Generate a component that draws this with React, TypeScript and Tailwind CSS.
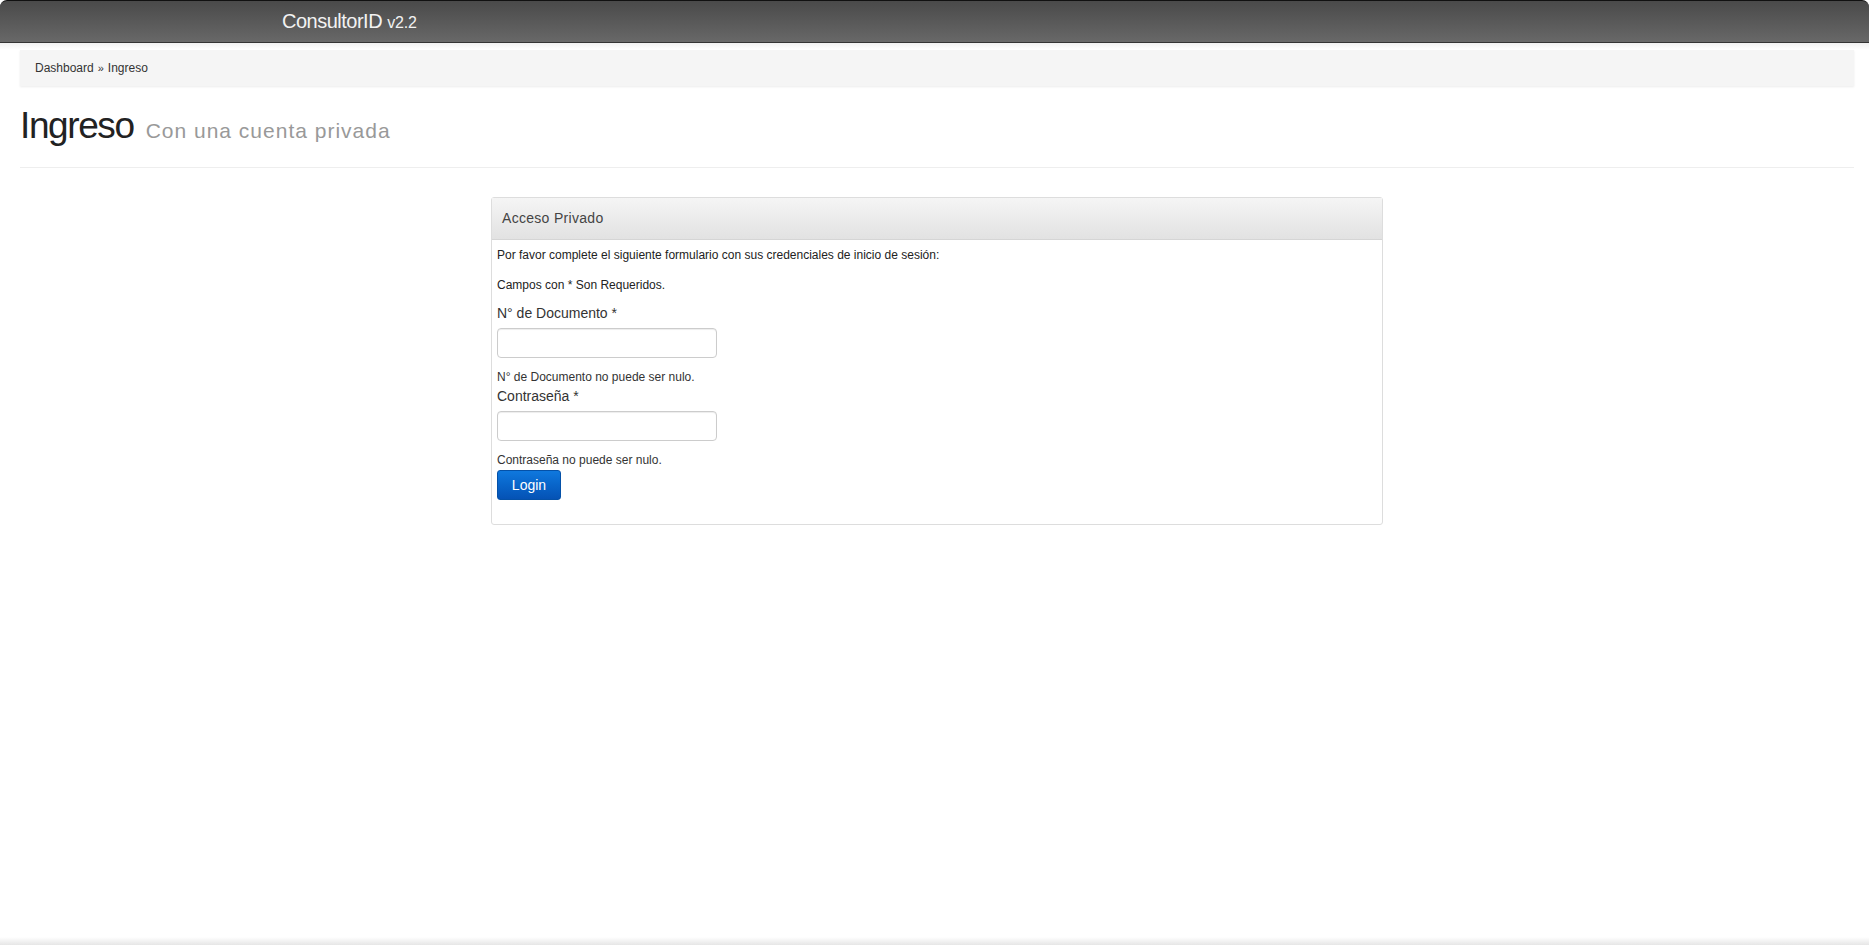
import { useState } from "react";

// Small helper for the plain field block (label, input, validation note)
function Field({
  label,
  error,
  type = "text",
}: {
  label: string;
  error: string;
  type?: string;
}) {
  const [value, setValue] = useState("");

  return (
    <div className="flex flex-col">
      <label className="text-[14px] leading-[21px] text-[#333]">{label}</label>
      <input
        type={type}
        value={value}
        onChange={(e) => setValue(e.target.value)}
        className="mt-[4px] h-[30px] w-[220px] rounded-[4px] border border-[#ccc] bg-white px-2 text-[13px] shadow-[inset_0_1px_1px_rgba(0,0,0,0.075)] outline-none"
      />
      <p className="mt-[10px] text-[12px] leading-[18px] text-[#333]">{error}</p>
    </div>
  );
}

export default function App() {
  return (
    <div
      className="flex min-h-screen flex-col bg-white"
      style={{ fontFamily: '"Liberation Sans", Arial, sans-serif' }}
    >
      {/* Top bar */}
      <header className="h-[43px] rounded-t-[7px] border-t border-b border-t-[#111] border-b-[#333] bg-gradient-to-b from-[#4a4a4a] to-[#686868]">
        <div className="pl-[282px] pt-[8px] text-[20px] leading-[24px] tracking-[-0.5px] text-[#f2f2f2]">
          ConsultorID <span className="text-[16px] tracking-[-0.2px]">v2.2</span>
        </div>
      </header>
      <div className="h-[7px] bg-gradient-to-b from-[#f0f0f0] to-white" />

      <main className="ml-[20px] mr-[15px] flex-1">
        {/* Breadcrumb */}
        <nav className="flex h-[36px] items-center bg-[#f5f5f5] px-[15px] text-[12px] text-[#333] shadow-[0_1px_2px_rgba(0,0,0,0.08)]">
          <a className="text-[#333]">Dashboard</a>
          <span className="mx-[4px] text-[11px]">»</span>
          <span>Ingreso</span>
        </nav>

        {/* Page title */}
        <div className="mt-[19px] flex items-baseline gap-[12px] border-b border-[#eee] pb-[20px]">
          <h1 className="text-[37px] leading-[42px] tracking-[-1.4px] text-[#222]">Ingreso</h1>
          <small className="text-[21px] tracking-[1px] text-[#999]">Con una cuenta privada</small>
        </div>

        {/* Login panel */}
        <div className="mx-auto mt-[29px] w-[892px] rounded-[3px] border border-[#ddd] bg-white">
          <div className="flex h-[42px] items-center border-b border-[#d5d5d5] bg-gradient-to-b from-[#f5f5f5] to-[#e2e2e2] px-[10px] text-[14px] tracking-[0.3px] text-[#444]">
            Acceso Privado
          </div>
          <div className="px-[5px] pb-[24px] pt-[6px] text-[12px] text-[#222]">
            <p className="leading-[18px]">
              Por favor complete el siguiente formulario con sus credenciales de inicio de sesión:
            </p>
            <p className="mt-[12px] leading-[18px]">Campos con * Son Requeridos.</p>

            <div className="mt-[9px]">
              <Field label="N° de Documento *" error="N° de Documento no puede ser nulo." />
              <Field label="Contraseña *" type="password" error="Contraseña no puede ser nulo." />
            </div>

            <button className="mt-[1px] h-[30px] w-[64px] rounded-[3px] border border-[#0451a8] bg-gradient-to-b from-[#0f78de] to-[#0552b5] text-[14px] text-white">
              Login
            </button>
          </div>
        </div>
      </main>

      {/* Footer strip */}
      <footer className="h-[8px] bg-gradient-to-b from-white to-[#e6e6e6]" />
    </div>
  );
}
